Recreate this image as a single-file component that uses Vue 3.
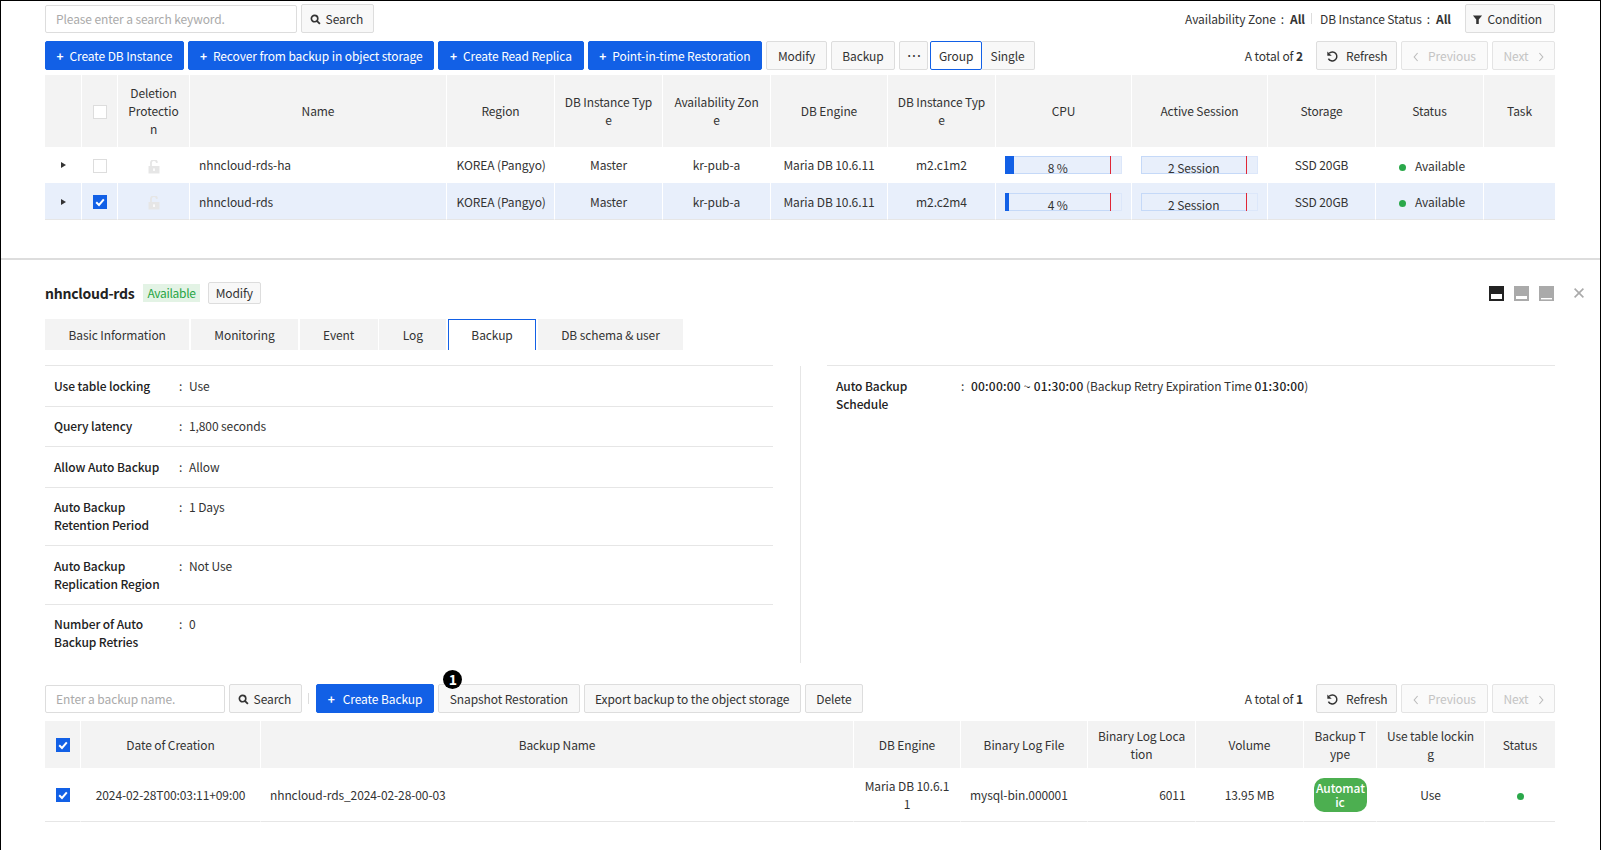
<script setup>
const instanceCols = [37, 36, 72, 257, 108, 108, 108, 117, 108, 136, 136, 108, 108, 71]
const backupCols = [36, 180, 593, 107, 127, 108, 108, 73, 108, 70]

const instanceHeads = ['Deletion Protection', 'Name', 'Region', 'DB Instance Type', 'Availability Zone', 'DB Engine', 'DB Instance Type', 'CPU', 'Active Session', 'Storage', 'Status', 'Task']

const instances = [
  { name: 'nhncloud-rds-ha', type: 'm2.c1m2', cpu: 8, checked: false },
  { name: 'nhncloud-rds', type: 'm2.c2m4', cpu: 4, checked: true }
]

const tabs = ['Basic Information', 'Monitoring', 'Event', 'Log', 'Backup', 'DB schema & user']

const infoRows = [
  { label: 'Use table locking', value: 'Use' },
  { label: 'Query latency', value: '1,800 seconds' },
  { label: 'Allow Auto Backup', value: 'Allow' },
  { label: 'Auto Backup Retention Period', value: '1 Days' },
  { label: 'Auto Backup Replication Region', value: 'Not Use' },
  { label: 'Number of Auto Backup Retries', value: '0' }
]

const backupHeads = ['Date of Creation', 'Backup Name', 'DB Engine', 'Binary Log File', 'Binary Log Location', 'Volume', 'Backup Type', 'Use table locking', 'Status']
</script>

<template>
  <div class="page">
    <section class="top">
      <div class="toolbar first">
        <input class="search-input wide" placeholder="Please enter a search keyword." />
        <button class="btn search">
          <svg class="ico" viewBox="0 0 12 12"><circle cx="5" cy="5" r="3.5" fill="none" stroke="#333" stroke-width="1.8" /><path d="M7.5 7.5L10.8 10.8" stroke="#333" stroke-width="2" /></svg>
          Search
        </button>
        <div class="filters">
          <span>Availability Zone<i class="colon">:</i><b>All</b></span>
          <span class="pipe"></span>
          <span>DB Instance Status<i class="colon">:</i><b>All</b></span>
          <button class="btn condition">
            <svg class="ico" viewBox="0 0 12 12"><path d="M1 1.5H11L7.4 6V11H4.6V6Z" fill="#333" /></svg>
            Condition
          </button>
        </div>
      </div>

      <div class="toolbar">
        <button class="btn primary"><span class="plus">+</span>Create DB Instance</button>
        <button class="btn primary"><span class="plus">+</span>Recover from backup in object storage</button>
        <button class="btn primary"><span class="plus">+</span>Create Read Replica</button>
        <button class="btn primary"><span class="plus">+</span>Point-in-time Restoration</button>
        <button class="btn">Modify</button>
        <button class="btn">Backup</button>
        <button class="btn dots">···</button>
        <div class="segment">
          <button class="btn active">Group</button>
          <button class="btn">Single</button>
        </div>
        <div class="pager">
          <span class="total">A total of <b>2</b></span>
          <button class="btn refresh">
            <svg class="ico big" viewBox="0 0 14 14"><path d="M3.4 3.6A4.8 4.8 0 1 1 2.6 9.2" fill="none" stroke="#333" stroke-width="1.6" /><path d="M1.4 1.6L6.2 6.2H1.4Z" fill="#333" /></svg>
            Refresh
          </button>
          <button class="btn off prev"><svg class="chev" viewBox="0 0 6 10"><path d="M4.6 1L1.2 5L4.6 9" /></svg>Previous</button>
          <button class="btn off next">Next<svg class="chev" viewBox="0 0 6 10"><path d="M1.4 1L4.8 5L1.4 9" /></svg></button>
        </div>
      </div>

      <table class="grid instances">
        <colgroup><col v-for="(w, i) in instanceCols" :key="i" :style="{ width: w + 'px' }" /></colgroup>
        <thead>
          <tr>
            <th></th>
            <th><span class="check"></span></th>
            <th v-for="(h, i) in instanceHeads" :key="i">{{ h }}</th>
          </tr>
        </thead>
        <tbody>
          <tr v-for="row in instances" :key="row.name" :class="{ selected: row.checked }">
            <td><span class="caret"></span></td>
            <td>
              <span class="check" :class="{ on: row.checked }">
                <svg v-if="row.checked" viewBox="0 0 14 14"><path d="M3.2 7.2L6 10L10.8 4.4" fill="none" stroke="#fff" stroke-width="2" /></svg>
              </span>
            </td>
            <td>
              <svg class="lock" viewBox="0 0 12 14"><path d="M3 6V3.6A3 3 0 0 1 9 2.8" fill="none" stroke="#e6e6e6" stroke-width="1.8" /><path d="M0.5 6H11.5V13.5H0.5Z" fill="#e6e6e6" /><rect x="5.2" y="8.4" width="1.6" height="2.6" fill="#fff" /></svg>
            </td>
            <td class="left">{{ row.name }}</td>
            <td class="nowrap">KOREA (Pangyo)</td>
            <td>Master</td>
            <td>kr-pub-a</td>
            <td>Maria DB 10.6.11</td>
            <td>{{ row.type }}</td>
            <td>
              <div class="meter">
                <span class="fill" :style="{ width: row.cpu + '%' }"></span>
                <span class="limit"></span>
                <span class="meter-text">{{ row.cpu }} %</span>
              </div>
            </td>
            <td>
              <div class="meter">
                <span class="limit"></span>
                <span class="meter-text">2 Session</span>
              </div>
            </td>
            <td>SSD 20GB</td>
            <td class="left status"><span class="dot"></span>Available</td>
            <td></td>
          </tr>
        </tbody>
      </table>
    </section>

    <section class="detail">
      <div class="detail-head">
        <strong class="title">nhncloud-rds</strong>
        <span class="badge">Available</span>
        <button class="btn small">Modify</button>
        <div class="win-icons">
          <svg viewBox="0 0 15 15"><rect width="15" height="15" fill="#222" /><rect x="2" y="8" width="11" height="5" fill="#fff" /></svg>
          <svg viewBox="0 0 15 15"><rect width="15" height="15" fill="#aaa" /><rect x="2" y="10" width="11" height="3" fill="#fff" /></svg>
          <svg viewBox="0 0 15 15"><rect width="15" height="15" fill="#aaa" /><rect x="2" y="12" width="11" height="1.4" fill="#fff" /></svg>
          <svg class="close" viewBox="0 0 10 10"><path d="M0.6 0.6L9.4 9.4M9.4 0.6L0.6 9.4" stroke="#aaa" stroke-width="1.6" /></svg>
        </div>
      </div>

      <div class="tabs">
        <div v-for="t in tabs" :key="t" class="tab" :class="{ current: t === 'Backup' }">{{ t }}</div>
      </div>

      <div class="info">
        <div class="info-col">
          <div v-for="r in infoRows" :key="r.label" class="info-row">
            <span class="info-label">{{ r.label }}</span>
            <span class="info-colon">:</span>
            <span>{{ r.value }}</span>
          </div>
        </div>
        <div class="info-col right">
          <div class="info-row">
            <span class="info-label">Auto Backup Schedule</span>
            <span class="info-colon">:</span>
            <span><b class="mid">00:00:00 ~ 01:30:00</b> (Backup Retry Expiration Time <b class="mid">01:30:00</b>)</span>
          </div>
        </div>
      </div>

      <div class="toolbar backup-bar">
        <input class="search-input" placeholder="Enter a backup name." />
        <button class="btn search">
          <svg class="ico" viewBox="0 0 12 12"><circle cx="5" cy="5" r="3.5" fill="none" stroke="#333" stroke-width="1.8" /><path d="M7.5 7.5L10.8 10.8" stroke="#333" stroke-width="2" /></svg>
          Search
        </button>
        <span class="pipe bar-pipe"></span>
        <button class="btn primary"><span class="plus wide-plus">+</span>Create Backup</button>
        <button class="btn marked">
          <span class="marker">1</span>
          Snapshot Restoration
        </button>
        <button class="btn">Export backup to the object storage</button>
        <button class="btn">Delete</button>
        <div class="pager">
          <span class="total">A total of <b>1</b></span>
          <button class="btn refresh">
            <svg class="ico big" viewBox="0 0 14 14"><path d="M3.4 3.6A4.8 4.8 0 1 1 2.6 9.2" fill="none" stroke="#333" stroke-width="1.6" /><path d="M1.4 1.6L6.2 6.2H1.4Z" fill="#333" /></svg>
            Refresh
          </button>
          <button class="btn off prev"><svg class="chev" viewBox="0 0 6 10"><path d="M4.6 1L1.2 5L4.6 9" /></svg>Previous</button>
          <button class="btn off next">Next<svg class="chev" viewBox="0 0 6 10"><path d="M1.4 1L4.8 5L1.4 9" /></svg></button>
        </div>
      </div>

      <table class="grid backups">
        <colgroup><col v-for="(w, i) in backupCols" :key="i" :style="{ width: w + 'px' }" /></colgroup>
        <thead>
          <tr>
            <th>
              <span class="check on"><svg viewBox="0 0 14 14"><path d="M3.2 7.2L6 10L10.8 4.4" fill="none" stroke="#fff" stroke-width="2" /></svg></span>
            </th>
            <th v-for="h in backupHeads" :key="h">{{ h }}</th>
          </tr>
        </thead>
        <tbody>
          <tr>
            <td><span class="check on"><svg viewBox="0 0 14 14"><path d="M3.2 7.2L6 10L10.8 4.4" fill="none" stroke="#fff" stroke-width="2" /></svg></span></td>
            <td>2024-02-28T00:03:11+09:00</td>
            <td class="left">nhncloud-rds_2024-02-28-00-03</td>
            <td>Maria DB 10.6.11</td>
            <td class="left">mysql-bin.000001</td>
            <td class="num">6011</td>
            <td>13.95 MB</td>
            <td><span class="pill">Automat<wbr />ic</span></td>
            <td>Use</td>
            <td><span class="dot only"></span></td>
          </tr>
        </tbody>
      </table>
    </section>
  </div>
</template>

<style scoped>
.page {
  box-sizing: border-box;
  width: 1601px;
  height: 850px;
  overflow: hidden;
  border: 1px solid #000;
  border-bottom: 0;
  padding: 0 45px 0 44px;
  font-family: "Noto Sans CJK KR", "Noto Sans", sans-serif;
  font-size: 12px;
  line-height: 18px;
  letter-spacing: -0.1px;
  color: #333;
  background: #fff;
}

.top {
  box-sizing: content-box;
  margin: 0 -45px 0 -44px;
  padding: 3px 45px 0 44px;
  height: 254px;
  border-bottom: 2px solid #ddd;
}

.toolbar {
  display: flex;
  align-items: center;
  gap: 4px;
  height: 29px;
  margin-top: 7px;
}

.toolbar.first {
  margin-top: 0;
  margin-bottom: 8px;
}

.btn {
  box-sizing: border-box;
  height: 29px;
  padding: 0 10.5px;
  border: 1px solid #ddd;
  border-radius: 2px;
  background: #f8f8f8;
  color: #333;
  font: inherit;
  letter-spacing: inherit;
  white-space: nowrap;
}

.btn.search {
  padding: 0 10px 0 8px;
}

.btn.primary {
  padding-right: 11px;
  border-color: #1260e6;
  background: #1260e6;
  color: #fff;
}

.plus {
  margin-right: 6px;
  font-weight: 700;
}

.wide-plus {
  margin-right: 8px;
}

.dots {
  width: 29px;
  padding: 0;
  font-size: 10px;
  font-weight: 700;
  letter-spacing: -1px;
}

.ico {
  width: 11px;
  height: 11px;
  margin-right: 2px;
  vertical-align: -1px;
}

.ico.big {
  width: 13px;
  height: 13px;
  margin-right: 5px;
  vertical-align: -2px;
}

.search-input {
  box-sizing: border-box;
  width: 180px;
  height: 28px;
  padding: 0 10px;
  border: 1px solid #ddd;
  border-radius: 2px;
  font: inherit;
  letter-spacing: inherit;
  color: #333;
  outline: none;
}

.search-input.wide {
  width: 252px;
}

.search-input::placeholder {
  color: #aaa;
}

.filters {
  display: flex;
  align-items: center;
  margin-left: auto;
}

.colon {
  margin: 0 6px 0 5px;
  font-style: normal;
}

.pipe {
  width: 1px;
  height: 11px;
  margin: 0 8px 0 6px;
  background: #ddd;
}

.bar-pipe {
  margin: 0 3px 0 2px;
}

.condition {
  width: 90px;
  margin-left: 14px;
  padding: 0 6px 0 0;
}

.segment {
  display: flex;
  margin-left: -2px;
}

.segment .btn {
  padding: 0;
  width: 52px;
  background: #f8f8f8;
}

.segment .btn + .btn {
  margin-left: -1px;
  width: 54px;
  border-left: 0;
}

.segment .active {
  position: relative;
  border-color: #1260e6;
  background: #fff;
}

.pager {
  display: flex;
  align-items: center;
  gap: 4px;
  margin-left: auto;
}

.total {
  margin-right: 9px;
}

.refresh {
  width: 81px;
  padding: 0;
}

.off {
  color: #c4c4c4;
  padding: 0;
  background: #fafafa;
  border-color: #e4e4e4;
}

.prev {
  width: 87px;
}

.next {
  width: 63px;
}

.chev {
  width: 6px;
  height: 10px;
  fill: none;
  stroke: #bbb;
  stroke-width: 1.1;
  vertical-align: -1px;
}

.prev .chev {
  margin-right: 9px;
}

.next .chev {
  margin-left: 9px;
}

.grid {
  width: 1510px;
  table-layout: fixed;
  border-collapse: separate;
  border-spacing: 0;
  margin-top: 5px;
}

.grid th,
.grid td {
  padding: 0 9.5px;
  text-align: center;
  word-break: break-all;
  font-weight: 400;
  border-right: 1px solid #fff;
}

.grid th:last-child,
.grid td:last-child {
  border-right: 0;
}

.grid th {
  background: #f3f3f3;
}

.grid td {
  border-bottom: 1px solid #e6e6e6;
}

.grid td.left {
  text-align: left;
  padding-left: 9px;
}

.grid td.num {
  text-align: right;
}

.grid td.nowrap {
  white-space: nowrap;
}

.instances thead tr {
  height: 72px;
}

.instances tbody tr {
  height: 36px;
}

.instances tbody tr.selected {
  height: 37px;
}

.instances tbody tr:first-child td {
  border-bottom: 0;
}

.selected td {
  padding-top: 1px;
  background: #e8effb;
}

.caret {
  display: inline-block;
  width: 0;
  height: 0;
  vertical-align: 2px;
  border-left: 5px solid #333;
  border-top: 3.5px solid transparent;
  border-bottom: 3.5px solid transparent;
}

.check {
  box-sizing: border-box;
  position: relative;
  top: -1px;
  display: inline-block;
  width: 14px;
  height: 14px;
  vertical-align: middle;
  border: 1px solid #ddd;
  background: #fff;
}

.check.on {
  border: 0;
  background: #1260e6;
}

.check svg {
  display: block;
}

.lock {
  width: 12px;
  height: 14px;
  vertical-align: middle;
}

.meter {
  box-sizing: border-box;
  position: relative;
  height: 18px;
  margin: 0 -0.5px 0 -1px;
  border: 1px solid #dce7fa;
  background: #e8effb;
  text-align: center;
}

/* stronger outline up to the limit mark */
.meter::before {
  content: "";
  position: absolute;
  left: -1px;
  right: 10px;
  top: -1px;
  bottom: -1px;
  border: 1px solid #c5d9f8;
  border-right: 0;
}

.fill {
  position: absolute;
  left: -1px;
  top: -1px;
  bottom: -1px;
  background: #1260e6;
}

.limit {
  position: absolute;
  right: 10px;
  top: -1px;
  bottom: -1px;
  width: 1px;
  background: #e02636;
}

.meter-text {
  position: relative;
  display: block;
  margin-right: 11px;
  line-height: 22px;
  height: 16px;
}

.grid td.status {
  padding-left: 23px;
  padding-top: 2px;
}

.dot {
  display: inline-block;
  width: 7px;
  height: 7px;
  margin-right: 9px;
  border-radius: 50%;
  background: #2aa84a;
}

.dot.only {
  margin-right: 0;
}

.detail-head {
  display: flex;
  align-items: center;
  height: 22px;
  margin-top: 22px;
}

.title {
  font-size: 14px;
  font-weight: 700;
  letter-spacing: -0.25px;
  color: #222;
}

.badge {
  margin-left: 9px;
  padding: 0 4px;
  background: #e3f3e5;
  color: #27a544;
  letter-spacing: -0.3px;
  line-height: 18px;
}

.btn.small {
  height: 22px;
  margin-left: 8px;
  padding: 0 7px;
}

.win-icons {
  display: flex;
  gap: 10px;
  align-items: center;
  margin-left: auto;
  margin-right: -29px;
}

.win-icons svg {
  width: 15px;
  height: 15px;
}

.win-icons .close {
  width: 10px;
  height: 10px;
  margin-left: 10px;
}

.tabs {
  display: flex;
  gap: 1.5px;
  margin-top: 15px;
  height: 31px;
}

.tab {
  display: flex;
  align-items: center;
  padding: 0 23.5px;
  background: #f3f3f3;
}

.tab.current {
  background: #fff;
  border: 1px solid #1260e6;
  border-bottom: 0;
  padding: 0 22.5px;
}

.info {
  display: flex;
  gap: 54px;
  height: 298px;
  margin-top: 15px;
}

.info-col {
  width: 728px;
  border-top: 1px solid #e6e6e6;
}

.info-col.right {
  position: relative;
  width: 728px;
}

.info-col.right::before {
  content: "";
  position: absolute;
  left: -27px;
  top: 0;
  bottom: 0;
  width: 1px;
  background: #e6e6e6;
}

.info-row {
  display: grid;
  grid-template-columns: 125px 10px 1fr;
  padding: 10.5px 9px 11px;
  border-bottom: 1px solid #e6e6e6;
}

.info-col.right .info-row {
  border-bottom: 0;
}

.info-col:not(.right) .info-row:last-child {
  border-bottom: 0;
}

.info-label {
  font-weight: 500;
  color: #222;
}

.mid {
  font-weight: 500;
  letter-spacing: 0.2px;
  color: #222;
}

.backup-bar {
  margin-top: 21px;
}

.marked {
  position: relative;
}

.marker {
  position: absolute;
  left: 4px;
  top: -15px;
  width: 19px;
  height: 19px;
  border-radius: 50%;
  background: #000;
  color: #fff;
  font-weight: 700;
  font-size: 14px;
  line-height: 19px;
}

.backups {
  margin-top: 8px;
}

.backups thead tr {
  height: 47px;
}

.backups tbody tr {
  height: 54px;
}

.pill {
  display: block;
  padding: 3px 2.5px;
  border-radius: 10px;
  background: #4caf50;
  color: #fff;
  font-weight: 500;
  line-height: 14px;
  word-break: normal;
}
</style>

<style>
html, body {
  margin: 0;
  background: #fff;
}
</style>
